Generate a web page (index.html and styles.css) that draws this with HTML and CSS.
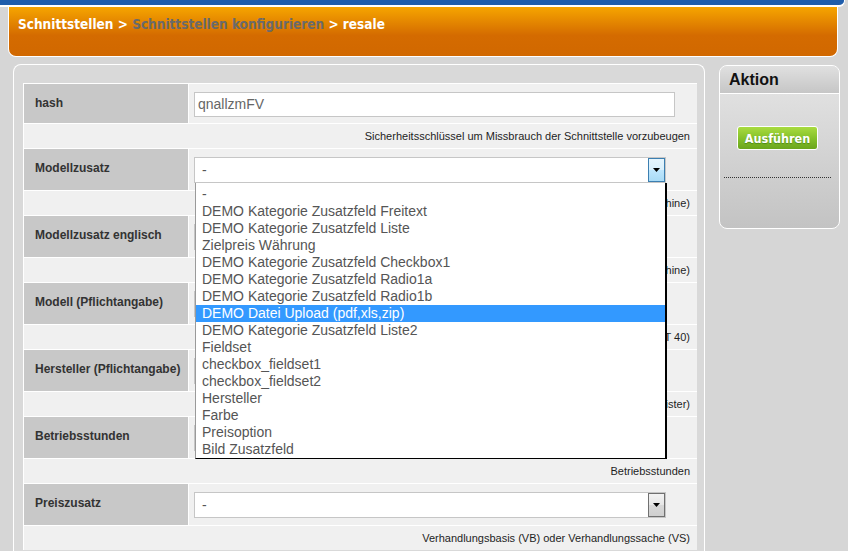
FILE: index.html
```html
<!DOCTYPE html>
<html lang="de">
<head>
<meta charset="utf-8">
<title>Schnittstellen konfigurieren – resale</title>
<link rel="stylesheet" href="styles.css">
</head>
<body>
<div class="topbar"></div>
<header class="crumbs">
  <span class="crumb">Schnittstellen</span> &gt; <span class="crumb muted">Schnittstellen konfigurieren</span> &gt; <span class="crumb">resale</span>
</header>
<div class="layout">
  <main class="panel">
    <div class="form">
      <div class="row row-input">
        <div class="label label-input">hash</div>
        <div class="value"><div class="input">qnallzmFV</div></div>
      </div>
      <div class="desc">Sicherheitsschlüssel um Missbrauch der Schnittstelle vorzubeugen</div>

      <div class="row">
        <div class="label">Modellzusatz</div>
        <div class="value">
          <div class="select open">
            <span class="select-text">-</span>
            <span class="arrow"><svg width="7" height="4" viewBox="0 0 7 4"><path d="M0 0h7L3.5 4z"/></svg></span>
            <ul class="options">
              <li>-</li>
              <li>DEMO Kategorie Zusatzfeld Freitext</li>
              <li>DEMO Kategorie Zusatzfeld Liste</li>
              <li>Zielpreis Währung</li>
              <li>DEMO Kategorie Zusatzfeld Checkbox1</li>
              <li>DEMO Kategorie Zusatzfeld Radio1a</li>
              <li>DEMO Kategorie Zusatzfeld Radio1b</li>
              <li class="selected">DEMO Datei Upload (pdf,xls,zip)</li>
              <li>DEMO Kategorie Zusatzfeld Liste2</li>
              <li>Fieldset</li>
              <li>checkbox_fieldset1</li>
              <li>checkbox_fieldset2</li>
              <li>Hersteller</li>
              <li>Farbe</li>
              <li>Preisoption</li>
              <li>Bild Zusatzfeld</li>
            </ul>
          </div>
        </div>
      </div>
      <div class="desc">Zusatzfeld für den Modellzusatz (z.B. Baumaschine)</div>

      <div class="row">
        <div class="label">Modellzusatz englisch</div>
        <div class="value">
          <div class="select"><span class="select-text">-</span><span class="arrow"><svg width="7" height="4" viewBox="0 0 7 4"><path d="M0 0h7L3.5 4z"/></svg></span></div>
        </div>
      </div>
      <div class="desc">Zusatzfeld für den englischen Modellzusatz (z.B. construction machine)</div>

      <div class="row">
        <div class="label">Modell (Pflichtangabe)</div>
        <div class="value">
          <div class="select"><span class="select-text">-</span><span class="arrow"><svg width="7" height="4" viewBox="0 0 7 4"><path d="M0 0h7L3.5 4z"/></svg></span></div>
        </div>
      </div>
      <div class="desc">Zusatzfeld für die Modellbezeichnung (z.B. MT 40)</div>

      <div class="row">
        <div class="label">Hersteller (Pflichtangabe)</div>
        <div class="value">
          <div class="select"><span class="select-text">-</span><span class="arrow"><svg width="7" height="4" viewBox="0 0 7 4"><path d="M0 0h7L3.5 4z"/></svg></span></div>
        </div>
      </div>
      <div class="desc">Zusatzfeld für den Hersteller (aus dem Herstellerregister)</div>

      <div class="row">
        <div class="label">Betriebsstunden</div>
        <div class="value">
          <div class="select"><span class="select-text">-</span><span class="arrow"><svg width="7" height="4" viewBox="0 0 7 4"><path d="M0 0h7L3.5 4z"/></svg></span></div>
        </div>
      </div>
      <div class="desc">Betriebsstunden</div>

      <div class="row">
        <div class="label">Preiszusatz</div>
        <div class="value">
          <div class="select"><span class="select-text">-</span><span class="arrow"><svg width="7" height="4" viewBox="0 0 7 4"><path d="M0 0h7L3.5 4z"/></svg></span></div>
        </div>
      </div>
      <div class="desc">Verhandlungsbasis (VB) oder Verhandlungssache (VS)</div>
    </div>
  </main>

  <aside class="action">
    <div class="action-head">Aktion</div>
    <div class="action-body">
      <button class="btn" type="button">Ausführen</button>
      <div class="dots"></div>
    </div>
  </aside>
</div>
</body>
</html>
```

FILE: styles.css
```css
html, body {
  margin: 0;
  padding: 0;
}

body {
  width: 848px;
  height: 551px;
  overflow: hidden;
  background: #d6d6d6;
  font-family: "Liberation Sans", Arial, sans-serif;
}

.topbar {
  width: 844px;
  height: 5px;
  background: #1f5dab;
  border: solid #fff;
  border-width: 0 1px 2px 0;
  border-bottom-right-radius: 6px;
}

.crumbs {
  margin-left: 8px;
  width: 819px;
  height: 40px;
  box-sizing: content-box;
  padding: 9px 0 0 9px;
  border: 1px solid #fff;
  border-top: 0;
  border-radius: 0 0 8px 8px;
  background: linear-gradient(#f6a500 0%, #d46b00 58%, #d16800 100%);
  font-family: "DejaVu Sans Condensed", "DejaVu Sans", sans-serif;
  font-weight: bold;
  font-size: 13.5px;
  line-height: 16px;
  color: #fff;
}

.crumb.muted {
  color: #6a6a6a;
}

.layout {
  display: flex;
  align-items: flex-start;
  gap: 14px;
  margin-top: 7px;
  padding-left: 13px;
}

.panel {
  width: 674px;
  border: 1px solid #fff;
  border-bottom: 0;
  border-radius: 8px 8px 0 0;
  background: #d9d9d9;
  padding: 18px 7px 40px 9px;
}

.form {
  background: #fff;
  display: flex;
  flex-direction: column;
  gap: 1px;
  padding: 1px 0 0 1px;
}

.row {
  display: flex;
  gap: 1px;
  height: 41px;
}

.row-input {
  height: 39px;
}

.label {
  width: 164px;
  box-sizing: border-box;
  background: #c8c8c8;
  display: flex;
  align-items: center;
  padding: 0 0 4px 11px;
  font-weight: bold;
  font-size: 12px;
  color: #333;
}

.label-input {
  padding-bottom: 1px;
}

.value {
  flex: 1;
  background: #f0f0f0;
  box-sizing: border-box;
  padding: 8px 0 0 5px;
}

.input {
  width: 481px;
  height: 25px;
  box-sizing: border-box;
  border: 1px solid #c6c6c6;
  background: #fff;
  padding: 0 0 0 3px;
  font-size: 14px;
  line-height: 23px;
  color: #666;
}

.select {
  position: relative;
  width: 472px;
  height: 26px;
  box-sizing: border-box;
  border: 1px solid #c6c6c6;
  background: #fff;
  display: flex;
  align-items: center;
  justify-content: space-between;
  padding-left: 7px;
  font-size: 14px;
  color: #555;
}

.arrow {
  width: 17px;
  height: 24px;
  box-sizing: border-box;
  border: 1px solid #707070;
  background: linear-gradient(#f3f3f3, #e6e6e6 50%, #d8d8d8 50%, #cfcfcf);
  display: flex;
  align-items: center;
  justify-content: center;
}

.arrow svg {
  display: block;
  fill: #000;
}

.select.open .arrow {
  border-color: #3c7fb1;
  background: linear-gradient(#e6f5fd, #d9f0fc 50%, #bee6fd 50%, #a9dbf6);
}

.options {
  position: absolute;
  top: calc(100% + 1px);
  left: 0;
  z-index: 10;
  width: 469px;
  margin: 0;
  padding: 3px 0 0;
  list-style: none;
  background: #fff;
  border: solid #000;
  border-width: 0 2px 1px 1px;
  border-left-color: #9a9a9a;
}

.options li {
  height: 17px;
  line-height: 17px;
  padding-left: 6px;
  font-size: 14px;
  color: #555;
  white-space: nowrap;
}

.options li.selected {
  background: #3399ff;
  color: #fff;
}

.desc {
  height: 24px;
  background: #f0f0f0;
  display: flex;
  align-items: center;
  justify-content: flex-end;
  padding-right: 7px;
  font-size: 11px;
  color: #1e1e1e;
  white-space: nowrap;
}

.action {
  width: 119px;
  height: 162px;
  margin-top: 1px;
  border: 1px solid #fff;
  border-radius: 8px;
  overflow: hidden;
  background: linear-gradient(#e6e6e6, #c3c3c3);
}

.action-head {
  height: 27px;
  border-bottom: 1px solid #fff;
  background: linear-gradient(#e0e0e0, #c6c6c6);
  display: flex;
  align-items: center;
  padding-left: 9px;
  font-weight: bold;
  font-size: 16px;
  color: #111;
}

.action-body {
  padding: 32px 0 0 4px;
}

.btn {
  display: block;
  margin-left: 13px;
  width: 81px;
  height: 24px;
  padding: 0;
  border: 1px solid #fff;
  border-radius: 3px;
  background: linear-gradient(#a9db40, #86c22a 50%, #6aa51c);
  font-family: "DejaVu Sans Condensed", "DejaVu Sans", sans-serif;
  font-weight: bold;
  font-size: 12.5px;
  color: #fff;
  text-shadow: 0 1px 1px rgba(0, 60, 0, 0.35);
}

.dots {
  margin-top: 27px;
  width: 107px;
  border-top: 1px dotted #333;
}
```
